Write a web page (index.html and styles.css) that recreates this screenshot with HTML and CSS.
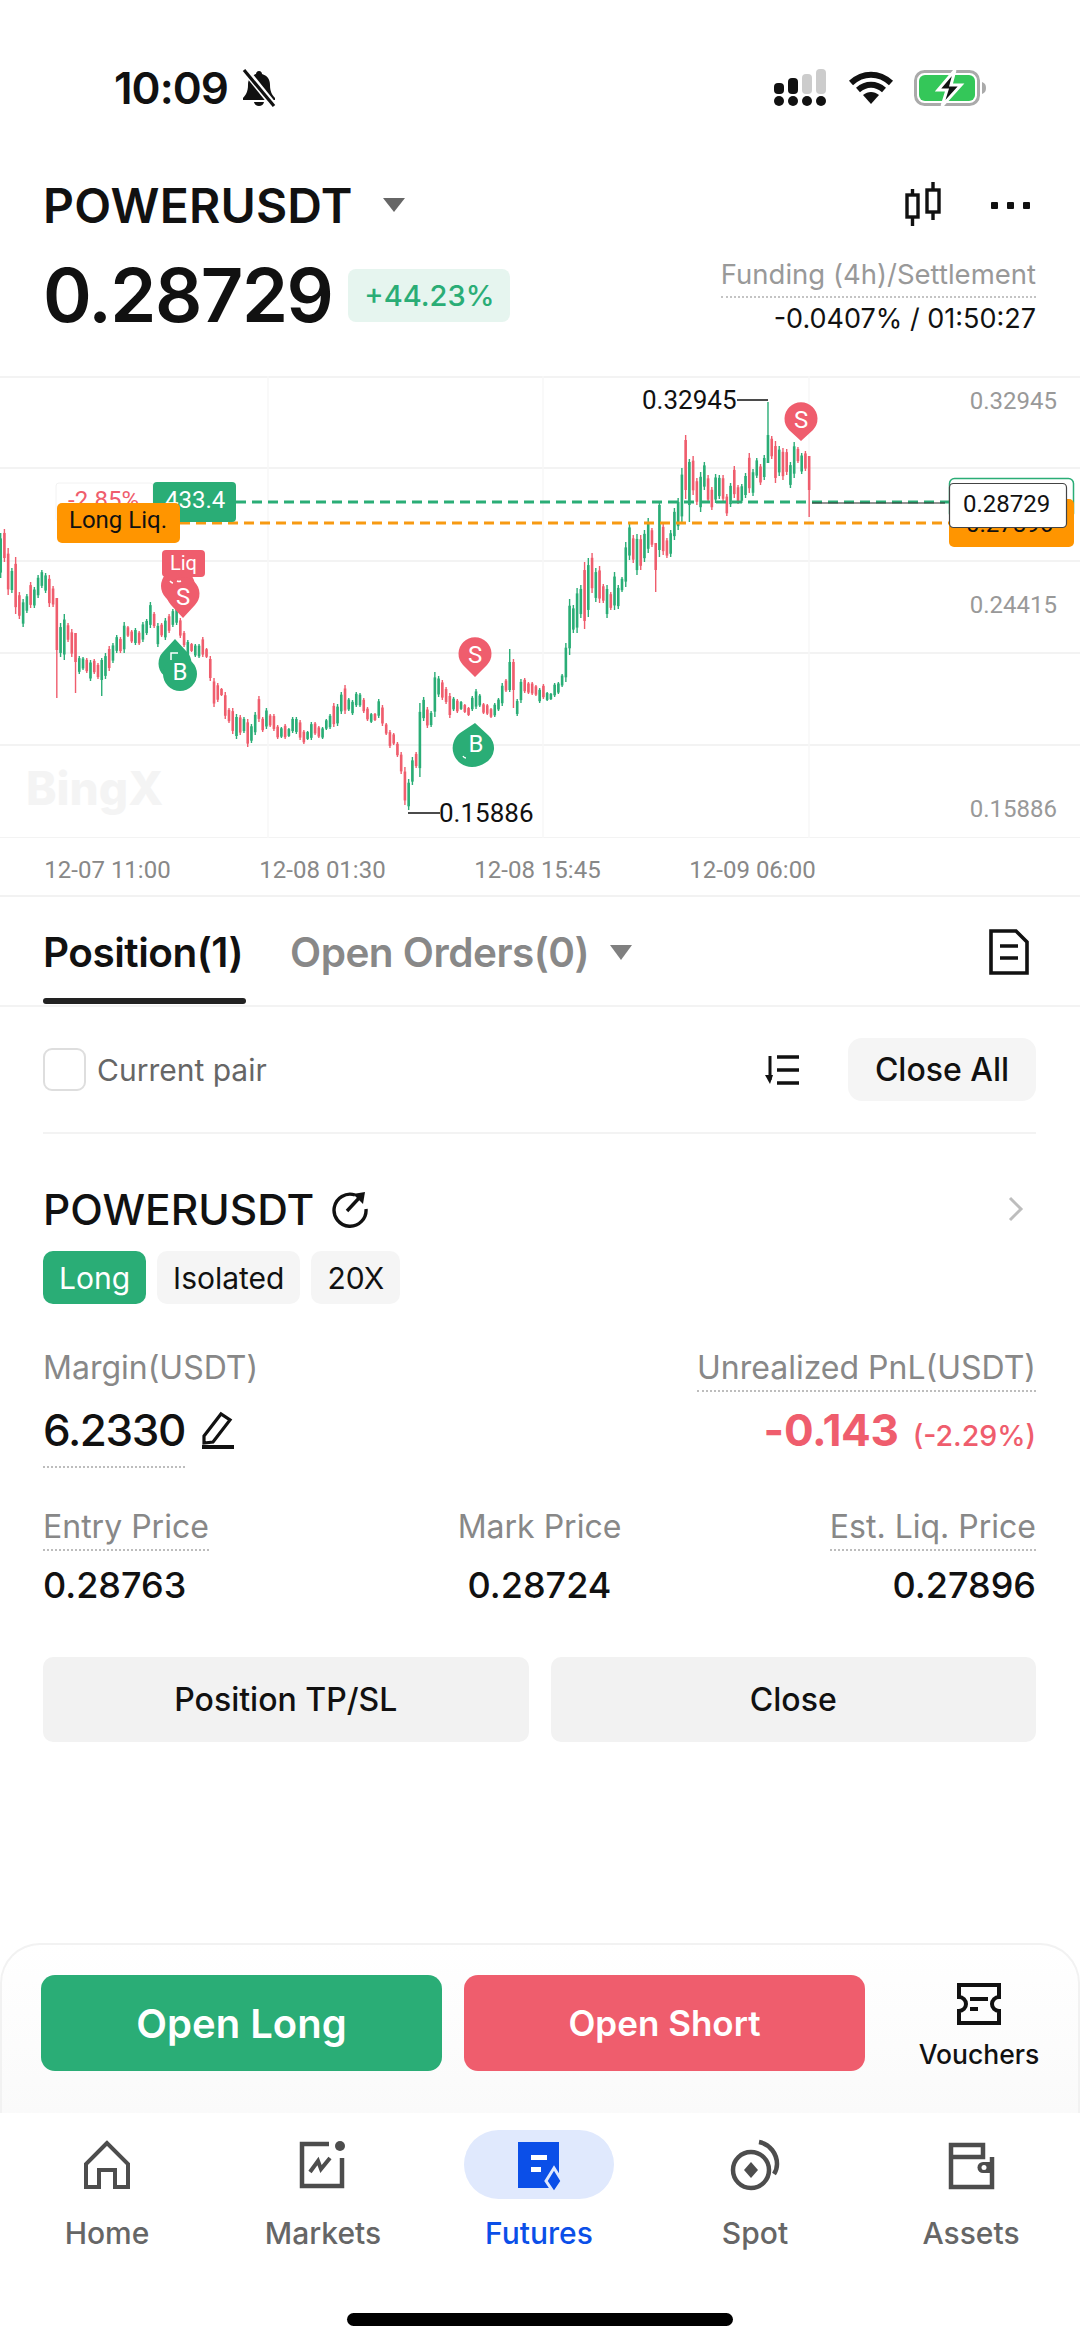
FILE: index.html
```html
<!DOCTYPE html>
<html lang="en">
<head>
    <meta charset="UTF-8">
    <title>POWERUSDT Futures</title>
    <link rel="stylesheet" href="styles.css">
</head>
<body>
<div class="page">

    <div class="status">
        <div class="status-left">
            <span class="clock">10:09</span>
            <svg class="bell" width="38" height="40" viewBox="0 0 38 40">
                <path d="M19 3c-2 0-3 1.500-3 3-5 1.500-8 5-8 11 0 6-2 10-5 13v2h32v-2c-3-3-5-7-5-13 0-6-3-9.500-8-11 0-1.500-1-3-3-3zM14 34c.5 2.500 2.500 4 5 4s4.500-1.500 5-4z" fill="#111"/>
                <path d="M5 2l29 36" stroke="#fff" stroke-width="7"/>
                <path d="M4 2l30 36" stroke="#111" stroke-width="3.200"/>
            </svg>
        </div>
        <div class="status-right">
            <svg width="54" height="38" viewBox="0 0 54 38">
                <rect x="0" y="14" width="10" height="11" rx="4" fill="#111"/>
                <rect x="14" y="9" width="10" height="16" rx="4" fill="#111"/>
                <rect x="28" y="5" width="10" height="20" rx="4" fill="#ccc"/>
                <rect x="42" y="0" width="10" height="25" rx="4" fill="#ccc"/>
                <circle cx="5" cy="32" r="5" fill="#111"/>
                <circle cx="19" cy="32" r="5" fill="#111"/>
                <circle cx="33" cy="32" r="5" fill="#111"/>
                <circle cx="47" cy="32" r="5" fill="#111"/>
            </svg>
            <svg width="46" height="34" viewBox="0 0 46 34">
                <path d="M3 12C15 1 31 1 43 12" fill="none" stroke="#111" stroke-width="6"/>
                <path d="M10 19c8-7 18-7 26 0" fill="none" stroke="#111" stroke-width="6"/>
                <path d="M15 24c5-4 11-4 16 0L23 33z" fill="#111"/>
            </svg>
            <svg width="74" height="36" viewBox="0 0 74 36">
                <rect x="1.500" y="1.500" width="63" height="33" rx="9" fill="#fff" stroke="#aaa" stroke-width="3"/>
                <rect x="5" y="5" width="56" height="26" rx="6" fill="#34c759"/>
                <path d="M68 12c3 1 4 3 4 6s-1 5-4 6z" fill="#aaa"/>
                <path d="M41 0L24 20h9l-5 16 19-21h-10z" fill="#111" stroke="#fff" stroke-width="3"/>
            </svg>
        </div>
    </div>

    <div class="pair">
        <div class="pair-top">
            <div class="pair-name">
                <span class="pair-title">POWERUSDT</span>
                <span class="caret caret-dark"></span>
            </div>
            <div class="pair-icons">
                <svg width="40" height="48" viewBox="0 0 40 48">
                    <g fill="none" stroke="#111" stroke-width="3.400">
                        <rect x="3" y="14" width="11" height="22"/>
                        <path d="M8.500 8v6M8.500 36v9"/>
                        <rect x="23" y="9" width="12" height="22"/>
                        <path d="M29 1v8M29 31v8"/>
                    </g>
                </svg>
                <div class="dots"><i></i><i></i><i></i></div>
            </div>
        </div>
        <div class="pair-bottom">
            <div class="price-wrap">
                <span class="price">0.28729</span>
                <span class="change">+44.23%</span>
            </div>
            <div class="funding">
                <span class="funding-label">Funding (4h)/Settlement</span>
                <span class="funding-value">-0.0407% / 01:50:27</span>
            </div>
        </div>
    </div>

    <div class="chart">
        <svg class="chart-svg" width="1080" height="462" viewBox="0 376 1080 462">
            <g class="grid">
                <path d="M0 377H1080M0 468H1080M0 561H1080M0 653H1080M0 745H1080M0 838H1080"/>
                <path d="M268 376V838M543 376V838M809 376V838"/>
            </g>
            <text class="watermark" x="26" y="805">BingX</text>
            <g id="candles"></g>

            <path class="line-green" d="M236 502H950"/>
            <path class="line-orange" d="M180 523H950"/>
            <path class="line-last" d="M812 503H945"/>

            <text class="axis-y" x="1057" y="409">0.32945</text>
            <text class="axis-y" x="1057" y="613">0.24415</text>
            <text class="axis-y" x="1057" y="817">0.15886</text>

            <path class="leader" d="M737 400H768M408 813H440"/>
            <text class="extreme" x="642" y="409">0.32945</text>
            <text class="extreme" x="439" y="822">0.15886</text>

            <g class="pin-red">
                <path d="M178 610l-12-12a17 17 0 1 1 24 0z"/>
                <path d="M183 618l-12-13a16.500 16.500 0 1 1 24 0z"/>
                <rect x="162" y="550" width="43" height="27" rx="4"/>
                <path d="M475 677l-12-12a16.500 16.500 0 1 1 24 0z"/>
                <path d="M801 441l-12-11a16.500 16.500 0 1 1 24 0z"/>
            </g>
            <g class="pin-green">
                <path d="M175 639l12 13a16.500 16.500 0 1 1-24 0z"/>
                <path d="M180 650l12 12a17 17 0 1 1-24 0z"/>
                <path d="M475 723l13 12a17 17 0 0 1-3 28c-3 2-8 4-13 4a19 19 0 0 1-12-34z"/>
            </g>
            <!-- bits of the markers hidden underneath that still show -->
            <path class="pin-scrap" d="M170 581q1.500 2 3 2M177 581q2 1 4 0M171 660v-7h7M463 756q1 2 3 2"/>
            <text class="pin-liq" x="183.500" y="570">Liq</text>
            <text class="pin-text" x="183" y="605">S</text>
            <text class="pin-text" x="180" y="680">B</text>
            <text class="pin-text" x="475" y="663">S</text>
            <text class="pin-text" x="476" y="752">B</text>
            <text class="pin-text" x="801" y="428">S</text>

            <rect class="tag-pct" x="56" y="483" width="97" height="38" rx="3"/>
            <text class="tag-pct-text" x="68" y="508">-2.85%</text>
            <rect class="tag-green" x="153" y="482" width="83" height="40" rx="4"/>
            <text class="tag-green-text" x="165" y="508">433.4</text>
            <rect class="tag-orange" x="57" y="503" width="123" height="40" rx="5"/>
            <text class="tag-orange-text" x="69" y="528">Long Liq.</text>

            <rect class="box-green" x="949.500" y="478.500" width="124" height="40" rx="5"/>
            <rect class="tag-orange" x="949" y="499" width="125" height="48" rx="5"/>
            <text class="tag-orange-text" x="966" y="532">0.27896</text>
            <rect class="box-last" x="949.500" y="483.500" width="117" height="44" rx="4"/>
            <text class="tag-last-text" x="963" y="512">0.28729</text>
        </svg>
    </div>

    <div class="axis-x">
        <span>12-07 11:00</span>
        <span>12-08 01:30</span>
        <span>12-08 15:45</span>
        <span>12-09 06:00</span>
    </div>

    <div class="tabs">
        <div class="tab tab-active">Position(1)</div>
        <div class="tab">Open Orders(0)</div>
        <span class="caret caret-gray"></span>
        <svg class="tabs-doc" width="42" height="46" viewBox="0 0 42 46">
            <path d="M3 2H28L39 13V44H3z" fill="none" stroke="#111" stroke-width="3.600"/>
            <path d="M12 17H30M12 29H30" stroke="#111" stroke-width="3.600"/>
        </svg>
    </div>

    <div class="filter">
        <div class="filter-left">
            <span class="checkbox"></span>
            <span class="filter-label">Current pair</span>
        </div>
        <div class="filter-right">
            <svg width="36" height="32" viewBox="0 0 36 32">
                <path d="M6 2V26" stroke="#111" stroke-width="3"/>
                <path d="M1 21l5 9 3-9z" fill="#111"/>
                <path d="M13 3H35M13 16H35M13 29H35" stroke="#111" stroke-width="3.400"/>
            </svg>
            <div class="close-all">Close All</div>
        </div>
    </div>

    <div class="position">
        <div class="pos-head">
            <div class="pos-name">
                <span>POWERUSDT</span>
                <svg width="38" height="38" viewBox="0 0 38 38">
                    <path d="M25 5a16 16 0 1 0 11 14" fill="none" stroke="#111" stroke-width="3.400"/>
                    <path d="M17 21L30 7" stroke="#111" stroke-width="3.400"/>
                    <path d="M23 4L35 2 33 14z" fill="#111"/>
                </svg>
            </div>
            <svg width="16" height="26" viewBox="0 0 16 26">
                <path d="M2 2l11 11L2 24" fill="none" stroke="#bdbdbd" stroke-width="3"/>
            </svg>
        </div>
        <div class="pos-tags">
            <span class="pos-tag pos-tag-long">Long</span>
            <span class="pos-tag">Isolated</span>
            <span class="pos-tag">20X</span>
        </div>

        <div class="pos-row">
            <div class="cell">
                <span class="cell-label">Margin(USDT)</span>
                <div class="margin-line">
                    <span class="margin-value">6.2330</span>
                    <svg width="34" height="38" viewBox="0 0 34 38">
                        <path d="M3 25L20 3l9 6-17 22-9 1z" fill="none" stroke="#111" stroke-width="3.200"/>
                        <path d="M1 36H33" stroke="#111" stroke-width="4"/>
                    </svg>
                </div>
            </div>
            <div class="cell cell-right">
                <span class="cell-label dotted">Unrealized PnL(USDT)</span>
                <div class="pnl">
                    <span class="pnl-value">-0.143</span>
                    <span class="pnl-pct">(-2.29%)</span>
                </div>
            </div>
        </div>

        <div class="prices">
            <div class="cell">
                <span class="cell-label dotted">Entry Price</span>
                <span class="price-value">0.28763</span>
            </div>
            <div class="cell cell-center">
                <span class="cell-label">Mark Price</span>
                <span class="price-value">0.28724</span>
            </div>
            <div class="cell cell-right">
                <span class="cell-label dotted">Est. Liq. Price</span>
                <span class="price-value">0.27896</span>
            </div>
        </div>

        <div class="pos-actions">
            <div class="pos-btn">Position TP/SL</div>
            <div class="pos-btn">Close</div>
        </div>
    </div>

    <div class="trade">
        <div class="trade-btn trade-long">Open Long</div>
        <div class="trade-btn trade-short">Open Short</div>
        <div class="vouchers">
            <svg width="46" height="44" viewBox="0 0 46 44">
                <path d="M3 3H43V15a7 7 0 0 0 0 14V41H3V29a7 7 0 0 0 0-14z" fill="none" stroke="#111" stroke-width="4"/>
                <path d="M14 17H32M14 27H22" stroke="#111" stroke-width="4"/>
            </svg>
            <span>Vouchers</span>
        </div>
    </div>

    <div class="bottom-nav">
        <div class="nav-items">
            <div class="nav-item">
                <div class="nav-icon">
                    <svg width="50" height="52" viewBox="0 0 50 52">
                        <path d="M25 4L4 25V48H17V31H33V48H46V25z" fill="none" stroke="#4d4d4d" stroke-width="4"/>
                    </svg>
                </div>
                <span>Home</span>
            </div>
            <div class="nav-item">
                <div class="nav-icon">
                    <svg width="50" height="52" viewBox="0 0 50 52">
                        <path d="M31 5H4V47H44V19" fill="none" stroke="#4d4d4d" stroke-width="4.500"/>
                        <circle cx="42" cy="7" r="5" fill="#4d4d4d"/>
                        <path d="M12 33l8-11 3 8 9-11" fill="none" stroke="#4d4d4d" stroke-width="4"/>
                    </svg>
                </div>
                <span>Markets</span>
            </div>
            <div class="nav-item nav-active">
                <div class="nav-icon">
                    <svg width="50" height="52" viewBox="0 0 50 52">
                        <rect x="4" y="3" width="41" height="46" fill="#0b4fe8"/>
                        <rect x="17" y="16" width="16" height="5" fill="#fff"/>
                        <rect x="17" y="28" width="10" height="5" fill="#fff"/>
                        <path d="M40 29l8 13-8 12-8-12z" fill="#0b4fe8" stroke="#e0e9fd" stroke-width="3"/>
                    </svg>
                </div>
                <span>Futures</span>
            </div>
            <div class="nav-item">
                <div class="nav-icon">
                    <svg width="52" height="54" viewBox="0 0 52 54">
                        <circle cx="22" cy="32" r="18" fill="none" stroke="#4d4d4d" stroke-width="4.500"/>
                        <path d="M22 24l7 8-7 8-7-8z" fill="#4d4d4d"/>
                        <path d="M30 4c11 2 18 12 18 22 0 4-1 7-3 10" fill="none" stroke="#4d4d4d" stroke-width="4.500"/>
                    </svg>
                </div>
                <span>Spot</span>
            </div>
            <div class="nav-item">
                <div class="nav-icon">
                    <svg width="50" height="50" viewBox="0 0 50 50">
                        <path d="M46 17V47H5V5H37V17H5" fill="none" stroke="#4d4d4d" stroke-width="4.500"/>
                        <path d="M46 22H37a5.500 5.500 0 0 0 0 11h9z" fill="#4d4d4d"/>
                        <circle cx="38" cy="27.500" r="2.500" fill="#fff"/>
                    </svg>
                </div>
                <span>Assets</span>
            </div>
        </div>
        <div class="home-bar"></div>
    </div>

</div>
<script src="chart.js"></script>
</body>
</html>
```

FILE: styles.css
```css
* {
    box-sizing: border-box;
}

body {
    margin: 0;
    background: #fff;
    font-family: Inter, "Noto Sans", sans-serif;
    color: #111;
}

.page {
    width: 1080px;
    height: 2348px;
    display: flex;
    flex-direction: column;
    overflow: hidden;
}

/* status bar */
.status {
    height: 170px;
    flex: none;
    padding: 66px 92px 0 114px;
    display: flex;
    justify-content: space-between;
    align-items: flex-start;
}

.status-left {
    display: flex;
    align-items: center;
    gap: 12px;
}

.clock {
    font-size: 44px;
    line-height: 44px;
    font-weight: 600;
    letter-spacing: -1px;
}

.status-right {
    display: flex;
    align-items: center;
    gap: 20px;
    padding-top: 3px;
}

/* pair header */
.pair {
    height: 206px;
    flex: none;
    padding: 0 44px 0 43px;
}

.pair-top {
    display: flex;
    justify-content: space-between;
    align-items: center;
    height: 70px;
}

.pair-name {
    display: flex;
    align-items: center;
    gap: 30px;
}

.pair-title {
    font-size: 48px;
    font-weight: 600;
    letter-spacing: 0.2px;
}

.caret {
    width: 0;
    height: 0;
    border-left: 11px solid transparent;
    border-right: 11px solid transparent;
}

.caret-dark {
    border-top: 14px solid #666;
}

.caret-gray {
    border-top: 15px solid #808080;
}

.pair-icons {
    display: flex;
    align-items: center;
    gap: 47px;
    padding-right: 6px;
}

.dots {
    display: flex;
    gap: 9px;
}

.dots i {
    width: 7px;
    height: 7px;
    border-radius: 1px;
    background: #111;
}

.pair-bottom {
    display: flex;
    justify-content: space-between;
    margin-top: 10px;
}

.price-wrap {
    display: flex;
    align-items: center;
    gap: 16px;
}

.price {
    font-size: 74px;
    line-height: 90px;
    font-weight: 600;
    letter-spacing: -1.500px;
}

.change {
    height: 53px;
    width: 162px;
    background: #e6f5ef;
    border-radius: 8px;
    color: #2aad76;
    font-size: 29px;
    font-weight: 500;
    display: flex;
    align-items: center;
    justify-content: center;
}

.funding {
    display: flex;
    flex-direction: column;
    align-items: flex-end;
    padding-top: 8px;
}

.funding-label {
    font-size: 27.500px;
    line-height: 33px;
    color: #999;
    border-bottom: 2px dotted #c4c4c4;
    padding-bottom: 5px;
}

.funding-value {
    font-size: 27px;
    line-height: 33px;
    margin-top: 4px;
}

/* chart */
.chart {
    height: 462px;
    flex: none;
    position: relative;
    font-family: Roboto, sans-serif;
}

.chart-svg {
    display: block;
    overflow: hidden;
}

.chart-svg text {
    font-family: Roboto, sans-serif;
    font-size: 24px;
}

.grid path {
    fill: none;
    stroke: #f3f3f3;
    stroke-width: 2;
}

.grid path + path {
    stroke: #f7f7f7;
    stroke-width: 1.500;
}

.chart-svg .watermark {
    font-family: Inter, sans-serif;
    font-size: 46px;
    font-weight: 800;
    fill: #f4f4f4;
}

.line-green,
.line-orange {
    fill: none;
    stroke-width: 3;
    stroke-dasharray: 10 6;
}

.line-green {
    stroke: #2aad76;
}

.line-orange {
    stroke: #f79a12;
}

.line-last {
    stroke: #333;
    stroke-width: 1.500;
    opacity: 0.7;
}

.axis-y {
    fill: #999;
    text-anchor: end;
}

.leader {
    stroke: #111;
    stroke-width: 1.500;
}

.chart-svg .extreme {
    fill: #111;
    font-size: 26px;
}

.pin-red {
    fill: #ef5d6d;
}

.pin-green {
    fill: #2aad76;
}

.pin-text {
    fill: #fff;
    text-anchor: middle;
}

.pin-scrap {
    fill: none;
    stroke: #fff;
    stroke-width: 1.500;
}

.chart-svg .pin-liq {
    fill: #fff;
    font-size: 20px;
    text-anchor: middle;
}

.tag-pct {
    fill: #fff;
    stroke: #f2f2f2;
}

.tag-pct-text {
    fill: #ef5d6d;
}

.tag-green {
    fill: #2aad76;
}

.tag-green-text {
    fill: #fff;
}

.tag-orange {
    fill: #ff9500;
}

.tag-orange-text {
    fill: #111;
}

.box-green {
    fill: #fff;
    stroke: #2aad76;
    stroke-width: 1.500;
}

.box-last {
    fill: #fff;
    stroke: #444;
    stroke-width: 1.200;
}

.tag-last-text {
    fill: #111;
}

.axis-x {
    height: 59px;
    flex: none;
    padding-top: 7px;
    display: grid;
    grid-template-columns: repeat(4, 215px);
    align-items: center;
    text-align: center;
    font-family: Roboto, sans-serif;
    font-size: 24px;
    color: #888;
    border-bottom: 2px solid #f2f2f2;
}

/* tabs */
.tabs {
    height: 110px;
    flex: none;
    padding: 2px 50px 0 43px;
    display: flex;
    align-items: center;
    border-bottom: 2px solid #f3f3f3;
    position: relative;
}

.tab {
    font-size: 40.500px;
    font-weight: 600;
    color: #888;
    margin-right: 47px;
    letter-spacing: -0.500px;
}

.tab-active {
    color: #111;
    position: relative;
}

.tab-active::after {
    content: "";
    position: absolute;
    left: 0;
    right: -3px;
    bottom: -27px;
    height: 6px;
    background: #222;
    border-radius: 3px;
}

.tabs .caret {
    margin-left: -26px;
}

.tabs-doc {
    margin-left: auto;
}

/* filter row */
.filter {
    margin: 0 44px 0 43px;
    height: 127px;
    flex: none;
    display: flex;
    justify-content: space-between;
    align-items: center;
    border-bottom: 2px solid #f3f3f3;
}

.filter-left,
.filter-right {
    display: flex;
    align-items: center;
}

.checkbox {
    width: 43px;
    height: 43px;
    border: 2px solid #dedede;
    border-radius: 9px;
    margin-right: 11px;
}

.filter-label {
    font-size: 30px;
    color: #666;
}

.filter-right {
    gap: 48px;
}

.close-all {
    width: 188px;
    height: 63px;
    background: #f5f5f5;
    border-radius: 14px;
    font-size: 32px;
    font-weight: 500;
    display: flex;
    align-items: center;
    justify-content: center;
}

/* position card */
.position {
    padding: 0 44px 0 43px;
    flex: 1;
}

.pos-head {
    display: flex;
    justify-content: space-between;
    align-items: center;
    margin-top: 50px;
    height: 50px;
    padding-right: 12px;
}

.pos-name {
    display: flex;
    align-items: center;
    gap: 16px;
    font-size: 42.500px;
    font-weight: 500;
}

.pos-tags {
    display: flex;
    gap: 11px;
    margin-top: 17px;
}

.pos-tag {
    height: 53px;
    padding: 0 16px;
    border-radius: 10px;
    background: #f5f5f5;
    font-size: 30px;
    display: flex;
    align-items: center;
}

.pos-tag-long {
    background: #2aad76;
    color: #fff;
}

.pos-row {
    display: flex;
    justify-content: space-between;
    margin-top: 45px;
}

.cell {
    display: flex;
    flex-direction: column;
    align-items: flex-start;
}

.cell-right {
    align-items: flex-end;
}

.cell-center {
    align-items: center;
}

.cell-label {
    font-size: 32px;
    line-height: 38px;
    color: #888;
    padding-bottom: 3px;
    border-bottom: 2px dotted transparent;
}

.cell-label.dotted {
    border-bottom-color: #bdbdbd;
}

.margin-line {
    display: flex;
    align-items: center;
    gap: 16px;
    margin-top: 10px;
}

.margin-value {
    font-size: 44px;
    line-height: 56px;
    font-weight: 500;
    letter-spacing: -1.400px;
    position: relative;
}

.margin-value::after {
    content: "";
    position: absolute;
    left: 0;
    right: 0;
    bottom: -10px;
    border-bottom: 2px dotted #bdbdbd;
}

.pnl {
    display: flex;
    align-items: baseline;
    gap: 14px;
    margin-top: 10px;
    color: #ef5d6d;
}

.pnl-value {
    font-size: 44px;
    line-height: 56px;
    font-weight: 700;
    letter-spacing: -0.300px;
}

.pnl-pct {
    font-size: 28.500px;
    font-weight: 500;
}

.prices {
    display: grid;
    grid-template-columns: 1fr 1fr 1fr;
    margin-top: 50px;
}

.prices .cell-right {
    justify-self: end;
}

.prices .cell-center {
    justify-self: center;
}

.price-value {
    font-size: 36px;
    line-height: 44px;
    font-weight: 500;
    margin-top: 12px;
}

.pos-actions {
    display: flex;
    gap: 22px;
    margin-top: 50px;
}

.pos-btn {
    flex: 1;
    height: 85px;
    background: #f2f2f2;
    border-radius: 10px;
    font-size: 32px;
    font-weight: 500;
    display: flex;
    align-items: center;
    justify-content: center;
}

/* trade bar */
.trade {
    height: 170px;
    flex: none;
    padding: 30px 0 0 39px;
    display: flex;
    align-items: flex-start;
    gap: 22px;
    border: 2px solid #f2f2f2;
    border-bottom: 0;
    border-radius: 40px 40px 0 0;
    background: linear-gradient(#fff, #fafafa);
}

.trade-btn {
    width: 401px;
    height: 96px;
    border-radius: 14px;
    color: #fff;
    font-weight: 600;
    display: flex;
    align-items: center;
    justify-content: center;
}

.trade-long {
    background: #2aad76;
    font-size: 40px;
}

.trade-short {
    background: #ef5d6d;
    font-size: 35px;
}

.vouchers {
    width: 120px;
    flex: none;
    margin-left: 32px;
    display: flex;
    flex-direction: column;
    align-items: center;
    font-size: 26.500px;
    font-weight: 500;
    padding-top: 7px;
    gap: 12px;
    white-space: nowrap;
}

.vouchers svg {
    display: block;
}

/* bottom nav */
.bottom-nav {
    height: 235px;
    flex: none;
    background: #fff;
    padding-top: 17px;
    position: relative;
}

.nav-items {
    display: grid;
    grid-template-columns: repeat(5, 216px);
    margin-left: -1px;
}

.nav-item {
    display: flex;
    flex-direction: column;
    align-items: center;
    font-size: 30px;
    font-weight: 500;
    color: #666;
}

.nav-icon {
    width: 150px;
    height: 69px;
    border-radius: 35px;
    display: flex;
    align-items: center;
    justify-content: center;
    margin-bottom: 16px;
}

.nav-active {
    color: #0b4fe8;
}

.nav-active .nav-icon {
    background: #e0e9fd;
}

.home-bar {
    width: 386px;
    height: 13px;
    border-radius: 7px;
    background: #000;
    margin: 62px auto 0;
}
```

FILE: chart.js
```js
// candles as [colour, high y, low y, body top, body bottom], y in page pixels
// body is optional, short candles just get a small wick either side
var candles = [
    ['g',533,578],['r',529,562],['r',548,595],['g',568,593],['r',557,614],['r',592,619],['g',599,627],['g',594,613],
    ['r',582,608],['g',587,608],['g',575,598],['g',570,588],['g',573,593],['r',575,607],['r',586,607],['r',598,698,598,650],
    ['g',623,657],['g',614,660],['r',623,642],['r',629,657],['r',633,693,633,662],['g',656,674],['g',657,670],['r',658,673],
    ['g',660,681],['r',659,674],['r',663,679],['g',658,696,660,680],['g',653,679],['r',646,671],['g',643,663],['g',635,653],
    ['r',637,653],['g',622,653],['r',626,637],['r',630,643],['g',628,645],['r',631,645],['g',622,642],['g',619,635],
    ['g',602,628],['r',612,628],['g',623,647],['r',623,637],['g',618,640],['r',614,633],['g',609,627],['g',606,625],
    ['r',618,638],['r',631,647],['g',640,657],['r',643,652],['g',644,657],['g',644,658],['r',637,657],['r',648,658],
    ['r',656,681],['r',678,707],['r',683,702],['r',688,696],['r',692,719],['r',708,723],['r',708,734],['g',714,739],
    ['r',715,735],['g',717,733],['r',719,747],['g',724,743],['g',712,735],['r',696,722],['r',717,732],['g',708,729],
    ['r',714,727],['r',714,731],['r',725,739],['g',727,738],['r',724,739],['g',728,737],['g',717,733],['g',717,734],
    ['r',720,740],['r',730,744],['g',731,740],['g',722,740],['r',722,735],['r',726,738],['g',727,739],['g',719,730],
    ['g',714,729],['r',703,727],['g',704,726],['g',692,714],['r',685,714],['g',698,711],['g',700,715],['g',692,707],
    ['g',693,707],['r',698,713],['r',707,721],['g',713,723],['r',713,721],['g',699,718],['r',705,726],['r',723,735],
    ['r',730,748],['r',733,745],['r',742,757],['r',752,774],['r',767,805],['g',779,810],['g',757,785],['r',752,768],
    ['g',703,777],['g',697,721],['r',707,728],['g',711,727],['g',672,717],['g',676,697],['r',680,700],['r',687,704],
    ['r',693,718],['g',697,711],['r',699,713],['g',701,710],['r',704,713],['r',707,716],['g',696,711],['g',689,709],
    ['g',694,707],['r',703,714],['r',704,715],['r',708,718],['g',703,717],['g',698,711],['g',683,706],['r',679,692],
    ['g',649,692,662,690],['r',659,708,662,690],['g',699,716],['g',679,703],['r',678,693],['r',682,694],['r',682,695],['r',685,696],
    ['g',688,703],['r',684,699],['g',692,701],['g',693,700],['g',683,697],['g',682,694],['g',674,687],['g',643,682],
    ['g',599,655],['g',605,633],['g',588,633],['g',585,618],['r',562,629],['g',558,617],['r',553,593],['g',568,602],
    ['r',566,603],['r',584,603],['g',585,618],['r',592,610],['g',572,610],['g',585,609],['g',577,592],['g',542,587],
    ['g',523,560],['r',535,563],['g',534,575],['r',535,570],['g',530,562],['g',518,553],['r',528,547],['r',543,592,543,570],
    ['g',502,557,505,550],['r',523,555],['r',538,558],['g',530,557],['g',508,540],['g',498,530],['g',468,523],['r',435,499,440,490],
    ['g',459,522,462,505],['r',456,495],['r',478,505],['g',472,512],['g',462,490],['r',475,503],['r',487,510],['g',474,503],
    ['g',475,499],['r',475,502],['r',494,516],['g',483,507],['r',466,498],['r',485,504],['g',484,503],['g',473,498],
    ['r',453,493],['g',469,496],['g',458,478],['r',464,485],['g',455,480],['g',402,463,435,463],['r',436,459],['r',441,483],
    ['g',446,476],['r',448,480],['r',449,475],['g',462,488],['g',442,478],['r',447,463],['g',453,474],['r',451,471],
    ['r',456,517,456,490]
];

var colours = { g: '#2aad76', r: '#ef5d6d' };
var group = document.getElementById('candles');
var svgNs = 'http://www.w3.org/2000/svg';

function addBar(x, top, bottom, width, colour) {
    var bar = document.createElementNS(svgNs, 'rect');
    bar.setAttribute('x', x - width / 2);
    bar.setAttribute('y', top);
    bar.setAttribute('width', width);
    bar.setAttribute('height', bottom - top);
    bar.setAttribute('fill', colour);
    group.appendChild(bar);
}

candles.forEach(function (c, i) {
    var x = 0.67 + i * 3.743;
    var inset = (c[2] - c[1]) * 0.12;
    var bodyTop = c.length > 3 ? c[3] : c[1] + inset;
    var bodyBottom = c.length > 3 ? c[4] : c[2] - inset;
    addBar(x, c[1], c[2], 1.4, colours[c[0]]);
    addBar(x, bodyTop, bodyBottom, 2.6, colours[c[0]]);
});
```
